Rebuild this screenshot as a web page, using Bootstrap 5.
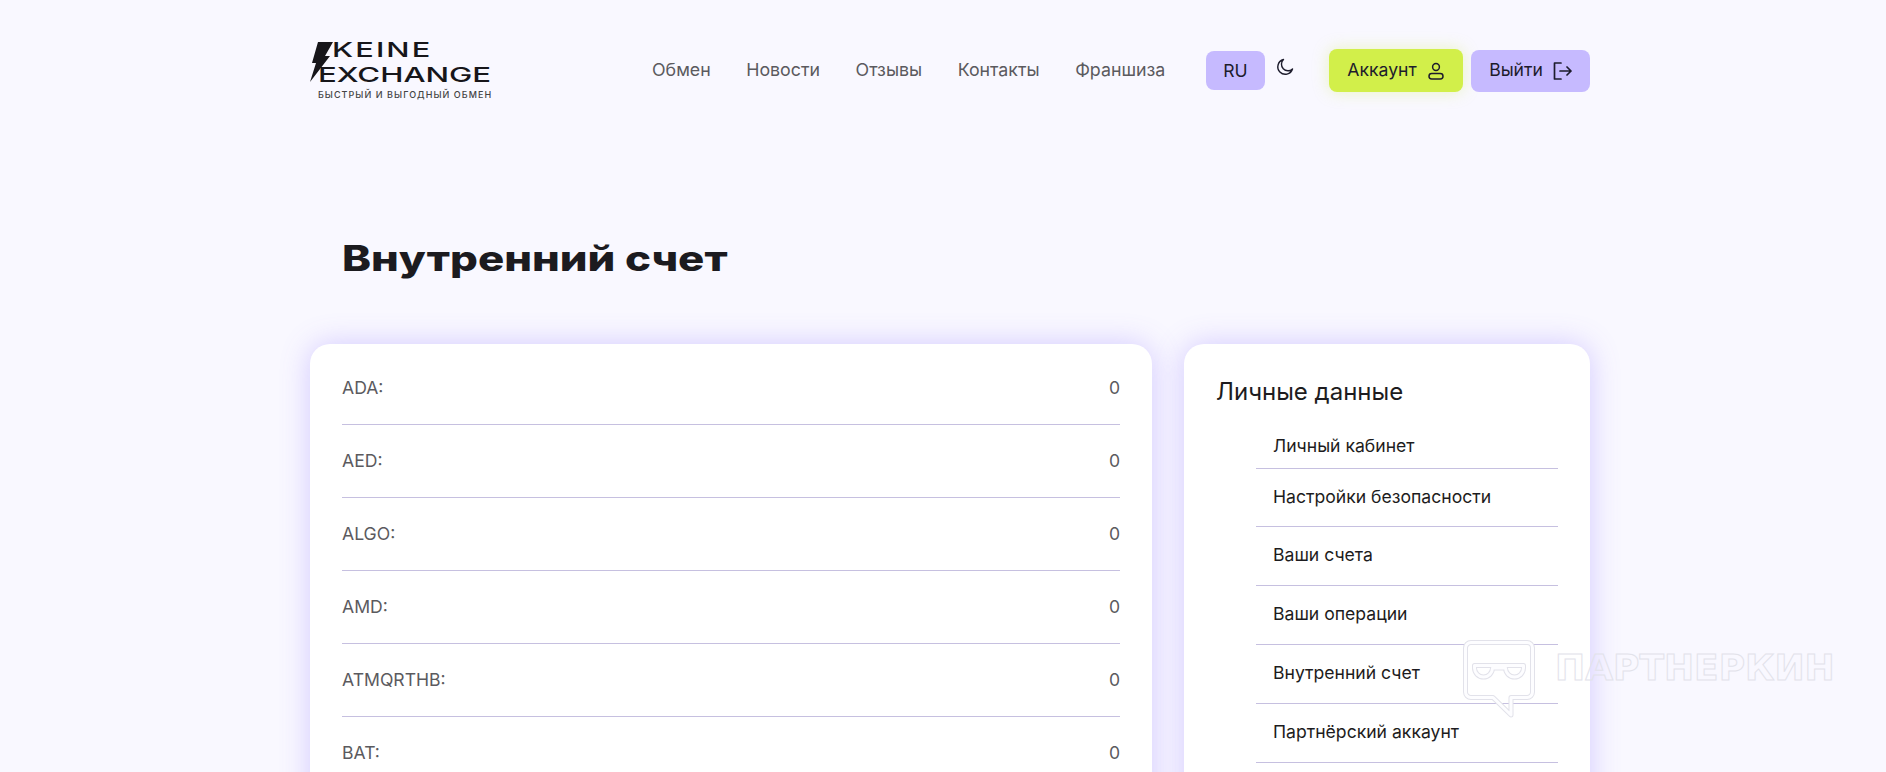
<!doctype html>
<html lang="ru"><head><meta charset="utf-8">
<link href="https://cdn.jsdelivr.net/npm/bootstrap@5.3.0/dist/css/bootstrap.min.css" rel="stylesheet">
<style>
html,body{height:772px;overflow:hidden}
body{background:#f9f8ff;font-family:Inter,"Noto Sans",sans-serif;color:#1d1c20;position:relative}
.shell{width:1280px;margin-left:310px}
.topbar{height:141px}
.brand{width:182px;height:57px;display:flex;color:#17161a;text-decoration:none;flex:none}
.brand svg{flex:none}
.brand-words{margin-left:-15px;line-height:1;width:174px}
.brand-one,.brand-two{font-family:Inter,sans-serif;font-weight:500;font-size:20.5px;display:block;white-space:nowrap;transform-origin:0 50%;height:25px;line-height:15px}
.brand-one{transform:scaleX(1.5);letter-spacing:1.4px;margin-left:14px}
.brand-two{transform:scaleX(1.52)}
.brand-sub{font-size:9px;letter-spacing:1.05px;color:#444;display:block;white-space:nowrap;font-weight:500;line-height:10px;margin-top:-2px}
.menu-link{color:#5b5a5e;font-size:17.8px;text-decoration:none;line-height:24px}
.menu{gap:35.5px;margin-left:160px;width:514px;flex:none;margin-top:-1px}
.lang{width:59px;height:39px;background:#c6baff;border-radius:8px;color:#1d1c2c;font-size:17.6px;line-height:39px;text-align:center;margin-left:40px;text-decoration:none;flex:none}
.moon{margin-left:11px;margin-top:-8px;flex:none}
.act{height:42px;border-radius:8px;font-size:17.6px;color:#1d1c2c;gap:10px;text-decoration:none;flex:none}
.act-acc{width:134px;height:43px;background:#d2ef4a;box-shadow:0 0 16px rgba(210,239,74,.35);margin-left:35px}
.act-out{width:119px;background:#c6baff;margin-left:8px}
.page-title{font-family:Inter,sans-serif;font-weight:800;font-size:35px;line-height:48px;color:#1c1b1f;margin:93px 0 0 32px;transform:scaleX(1.25);transform-origin:0 50%;white-space:nowrap}
.cols{display:flex;gap:32px;margin-top:62px;align-items:flex-start}
.panel{background:#fff;border-radius:20px;box-shadow:0 0 30px rgba(120,90,255,.29);padding-bottom:80px}
.panel-main{width:842px;padding-left:32px;padding-right:32px}
.panel-side{width:406px;padding-top:32px;padding-left:32px;padding-right:32px}
.bal{display:flex;justify-content:space-between;height:73px;padding-top:24px;line-height:24px;font-size:17.6px;color:#5b5a5e;border-bottom:1px solid #c6c0e0}
.bal:first-child{height:81px;padding-top:32px}
.bal:last-child{border:0}
.side-head{font-size:24px;line-height:32px;color:#1d1c20;margin-bottom:15px}
.side-list{list-style:none;margin:0 0 0 40px;padding:0}
.side-list a{display:block;height:59px;padding:16px 17px 0;font-size:17.6px;line-height:24px;color:#1d1c20;text-decoration:none;border-bottom:1px solid #c6c0e0}
.side-list li:first-child a{height:46px;padding-top:11px}
.side-list li:nth-child(2) a{height:58px}
.mark-wrap{position:absolute;left:1463px;top:640px;display:flex;align-items:flex-start;pointer-events:none}
.mark-text{font-family:"DejaVu Sans",sans-serif;font-weight:700;font-size:36px;line-height:40px;color:transparent;-webkit-text-stroke:1px #e2e2ea;margin:8px 0 0 20px}
</style></head><body>
<div class="shell">
<header class="topbar d-flex align-items-center">
<a class="brand" href="#"><svg width="23" height="40" viewBox="0 0 23 40"><path d="M8 0H23L15 14H20L0 40L6 21H2Z" fill="#17161a"/></svg>
<span class="brand-words"><span class="brand-one">KEINE</span><span class="brand-two">EXCHANGE</span><span class="brand-sub">БЫСТРЫЙ И ВЫГОДНЫЙ ОБМЕН</span></span></a>
<nav class="menu d-flex"><a class="menu-link" href="#">Обмен</a><a class="menu-link" href="#">Новости</a><a class="menu-link" href="#">Отзывы</a><a class="menu-link" href="#">Контакты</a><a class="menu-link" href="#">Франшиза</a></nav>
<a class="lang" href="#">RU</a>
<svg class="moon" width="18" height="18" viewBox="0 0 18 18" fill="none" stroke="#1d1c2c" stroke-width="1.4" stroke-linecap="round" stroke-linejoin="round"><path d="M7.5 1.5a7.5 7.5 0 1 0 9 9.5A6.5 6.5 0 0 1 7.5 1.5Z"/></svg>
<a class="act act-acc d-flex align-items-center justify-content-center" href="#">Аккаунт<svg width="18" height="18" viewBox="0 0 18 18" fill="none" stroke="#1d1c2c" stroke-width="1.5"><circle cx="9" cy="5" r="3.4"/><rect x="2" y="11.5" width="14" height="5.5" rx="2.7"/></svg></a>
<a class="act act-out d-flex align-items-center justify-content-center" href="#">Выйти<svg width="19" height="18" viewBox="0 0 19 18" fill="none" stroke="#1d1c2c" stroke-width="1.7" stroke-linecap="round" stroke-linejoin="round"><path d="M8 1H1.500v16H8M7 9h11M14 5l4 4-4 4"/></svg></a>
</header>
<h1 class="page-title">Внутренний счет</h1>
<div class="cols">
<section class="panel panel-main">
<div class="bal"><span>ADA:</span><span>0</span></div>
<div class="bal"><span>AED:</span><span>0</span></div>
<div class="bal"><span>ALGO:</span><span>0</span></div>
<div class="bal"><span>AMD:</span><span>0</span></div>
<div class="bal"><span>ATMQRTHB:</span><span>0</span></div>
<div class="bal"><span>BAT:</span><span>0</span></div>
</section>
<aside class="panel panel-side">
<div class="side-head">Личные данные</div>
<ul class="side-list">
<li><a href="#">Личный кабинет</a></li>
<li><a href="#">Настройки безопасности</a></li>
<li><a href="#">Ваши счета</a></li>
<li><a href="#">Ваши операции</a></li>
<li><a href="#">Внутренний счет</a></li>
<li><a href="#">Партнёрский аккаунт</a></li>
</ul>
</aside>
</div>
</div>
<div class="mark-wrap"><svg width="72" height="79" viewBox="0 0 72 79" fill="none"><g stroke="#e2e2ea" stroke-width="5" stroke-linejoin="round"><path d="M8 2.500H64a5.500 5.500 0 0 1 5.500 5.500V52a5.500 5.500 0 0 1-5.500 5.500H48V75L30 57.500H8A5.500 5.500 0 0 1 2.500 52V8A5.500 5.500 0 0 1 8 2.500Z"/><path d="M11.500 25.500H60.500V28a9 9 0 0 1-18 0H29.500a9 9 0 0 1-18 0Z"/></g><g stroke="#fdfdff" stroke-width="3" stroke-linejoin="round"><path d="M8 2.500H64a5.500 5.500 0 0 1 5.500 5.500V52a5.500 5.500 0 0 1-5.500 5.500H48V75L30 57.500H8A5.500 5.500 0 0 1 2.500 52V8A5.500 5.500 0 0 1 8 2.500Z"/><path d="M11.500 25.500H60.500V28a9 9 0 0 1-18 0H29.500a9 9 0 0 1-18 0Z"/></g></svg><span class="mark-text">ПАРТНЕРКИН</span></div>
</body></html>
